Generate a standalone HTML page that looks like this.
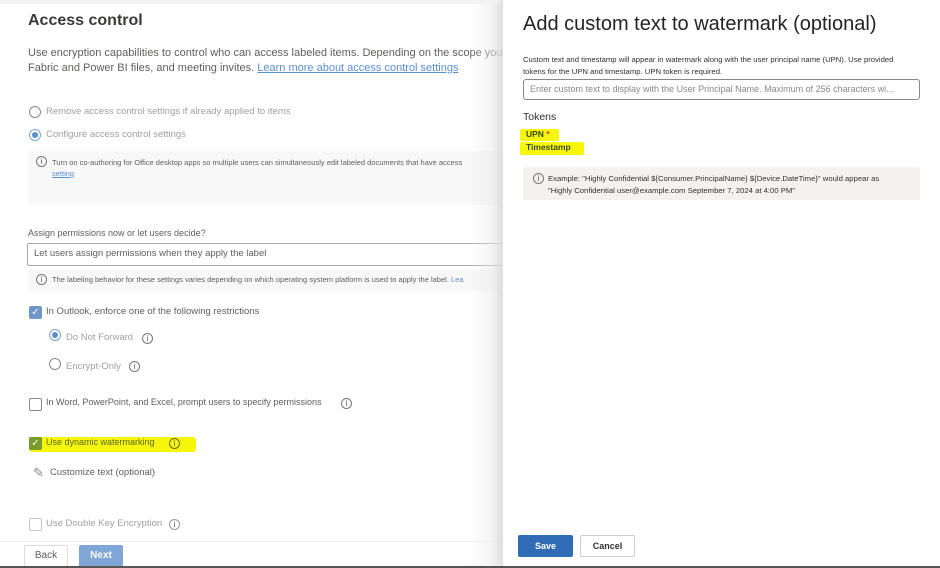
<!DOCTYPE html>
<html><head><style>
*{margin:0;padding:0;box-sizing:border-box}
body{width:940px;height:568px;overflow:hidden;background:#fff;font-family:"Liberation Sans",sans-serif;position:relative;color:#323130}
.a{position:absolute;white-space:nowrap}
.left{position:absolute;left:0;top:0;width:502px;height:566px;background:#fff;overflow:hidden;border-top:4px solid #f3f3f3}
.shade{position:absolute;left:470px;top:0;width:32px;height:566px;background:linear-gradient(90deg,rgba(255,255,255,0),rgba(235,235,235,.8))}
.g{color:#a19f9d}
.radio{position:absolute;width:12px;height:12px;border:1px solid #8a8886;border-radius:50%;background:#fff}
.radio.on{border-color:#7aa1d2}
.radio.on:after{content:"";position:absolute;left:2px;top:2px;width:6px;height:6px;border-radius:50%;background:#5b8fd0}
.cb{position:absolute;width:13px;height:13px;border:1px solid #8a8886;border-radius:2px;background:#fff}
.cb.on{background:#6f97cc;border-color:#6f97cc;color:#fff;font-size:10px;line-height:11px;text-align:center}
.info{position:absolute;width:11px;height:11px;border:1px solid #777;border-radius:50%;font-size:8px;line-height:9px;text-align:center;color:#555}
.hl{position:absolute;background:#f6f60a}
.right{position:absolute;left:502px;top:0;width:438px;height:566px;background:#fff;border-left:1px solid #e0e0e0;box-shadow:-4px 0 8px rgba(0,0,0,.08)}
</style></head><body>
<div class="left">
<div class="a" style="left:28px;top:8px;font-size:16px;font-weight:bold;color:#3b3a39">Access control</div>
<div class="a" style="left:28px;top:42px;font-size:11px;line-height:15px;color:#605e5c">Use encryption capabilities to control who can access labeled items. Depending on the scope you s<br>Fabric and Power BI files, and meeting invites. <span style="color:#5b8fd0;text-decoration:underline">Learn more about access control settings</span></div>
<div class="radio" style="left:29px;top:102px"></div>
<div class="a g" style="left:46px;top:102px;font-size:9.5px">Remove access control settings if already applied to items</div>
<div class="radio on" style="left:29px;top:125px"></div>
<div class="a g" style="left:46px;top:125px;font-size:9.5px">Configure access control settings</div>
<div class="a" style="left:28px;top:147px;width:480px;height:54px;background:#f8f8f8"></div>
<div class="info" style="left:36px;top:152px">i</div>
<div class="a" style="left:52px;top:153px;font-size:7.5px;color:#605e5c;line-height:11px">Turn on co-authoring for Office desktop apps so multiple users can simultaneously edit labeled documents that have access<br><span style="color:#5b8fd0;text-decoration:underline">setting</span></div>
<div class="a" style="left:28px;top:224px;font-size:9px;color:#605e5c">Assign permissions now or let users decide?</div>
<div class="a" style="left:27px;top:239px;width:480px;height:23px;border:1px solid #a8a8a8;border-radius:2px"></div>
<div class="a" style="left:34px;top:244px;font-size:9.5px;color:#605e5c">Let users assign permissions when they apply the label</div>
<div class="a" style="left:28px;top:265px;width:480px;height:22px;background:#f8f8f8"></div>
<div class="info" style="left:36px;top:270px">i</div>
<div class="a" style="left:52px;top:271px;font-size:7.5px;color:#605e5c">The labeling behavior for these settings varies depending on which operating system platform is used to apply the label. <span style="color:#5b8fd0">Lea</span></div>
<div class="cb on" style="left:29px;top:302px">✓</div>
<div class="a" style="left:46px;top:302px;font-size:9.5px;color:#605e5c">In Outlook, enforce one of the following restrictions</div>
<div class="radio on" style="left:49px;top:325px"></div>
<div class="a g" style="left:66px;top:328px;font-size:9.5px">Do Not Forward</div>
<div class="info" style="left:142px;top:329px">i</div>
<div class="radio" style="left:49px;top:354px"></div>
<div class="a g" style="left:66px;top:357px;font-size:9.5px">Encrypt-Only</div>
<div class="info" style="left:129px;top:357px">i</div>
<div class="cb" style="left:29px;top:394px"></div>
<div class="a" style="left:46px;top:393px;font-size:9px;color:#605e5c">In Word, PowerPoint, and Excel, prompt users to specify permissions</div>
<div class="info" style="left:341px;top:394px">i</div>
<div class="hl" style="left:29px;top:433px;width:167px;height:15px;border-radius:3px"></div>
<div class="cb on" style="left:29px;top:433px;background:#7a9a2a;border-color:#7a9a2a">✓</div>
<div class="a" style="left:46px;top:433px;font-size:9px;color:#5a6a20">Use dynamic watermarking</div>
<div class="info" style="left:169px;top:434px;border-color:#6a6a20">i</div>
<div class="a" style="left:33px;top:461px;font-size:13px;color:#8a8886">✎</div>
<div class="a" style="left:50px;top:463px;font-size:9.5px;color:#605e5c">Customize text (optional)</div>
<div class="cb" style="left:29px;top:514px;border-color:#c8c6c4"></div>
<div class="a g" style="left:46px;top:514px;font-size:9.5px">Use Double Key Encryption</div>
<div class="info" style="left:169px;top:515px;border-color:#999">i</div>
<div class="a" style="left:0;top:537px;width:502px;height:1px;background:#eee"></div>
<div class="a" style="left:24px;top:541px;width:44px;height:22px;border:1px solid #ddd;border-radius:2px;font-size:10px;line-height:20px;text-align:center;color:#605e5c">Back</div>
<div class="a" style="left:79px;top:541px;width:44px;height:22px;background:#7fa6d6;border-radius:2px;font-size:10px;font-weight:bold;line-height:22px;text-align:center;color:#fff">Next</div>
<div class="shade"></div>
</div>
<div class="right">
<div class="a" style="left:20px;top:13px;font-size:20px;color:#252423">Add custom text to watermark (optional)</div>
<div class="a" style="left:20px;top:54px;font-size:7.7px;line-height:11.5px;color:#323130">Custom text and timestamp will appear in watermark along with the user principal name (UPN). Use provided<br>tokens for the UPN and timestamp. UPN token is required.</div>
<div class="a" style="left:20px;top:79px;width:397px;height:21px;border:1px solid #8a8886;border-radius:3px"></div>
<div class="a" style="left:27px;top:84px;font-size:9px;color:#8a8886">Enter custom text to display with the User Principal Name. Maximum of 256 characters wi...</div>
<div class="a" style="left:20px;top:111px;font-size:10.5px;color:#323130">Tokens</div>
<div class="hl" style="left:17px;top:129px;width:39px;height:12px;border-radius:2px"></div>
<div class="a" style="left:23px;top:129px;font-size:8.5px;font-weight:bold;color:#3a4a00">UPN <span style="color:#d13438">*</span></div>
<div class="hl" style="left:17px;top:142px;width:64px;height:13px;border-radius:2px"></div>
<div class="a" style="left:23px;top:142px;font-size:8.5px;font-weight:bold;color:#3a4a00">Timestamp</div>
<div class="a" style="left:20px;top:167px;width:397px;height:33px;background:#f3f2f1;border-radius:2px"></div>
<div class="info" style="left:30px;top:173px">i</div>
<div class="a" style="left:45px;top:173px;font-size:7.7px;line-height:11.5px;color:#323130">Example: "Highly Confidential ${Consumer.PrincipalName} ${Device.DateTime}" would appear as<br>"Highly Confidential user@example.com September 7, 2024 at 4:00 PM"</div>
<div class="a" style="left:15px;top:535px;width:55px;height:22px;background:#2f6cb5;border-radius:2px;font-size:9px;font-weight:bold;line-height:22px;text-align:center;color:#fff">Save</div>
<div class="a" style="left:77px;top:535px;width:55px;height:22px;border:1px solid #ccc;border-radius:2px;font-size:9px;font-weight:bold;line-height:20px;text-align:center;color:#323130">Cancel</div>
</div>
<div class="a" style="left:0;top:566px;width:940px;height:2px;background:#555"></div>
</body></html>
